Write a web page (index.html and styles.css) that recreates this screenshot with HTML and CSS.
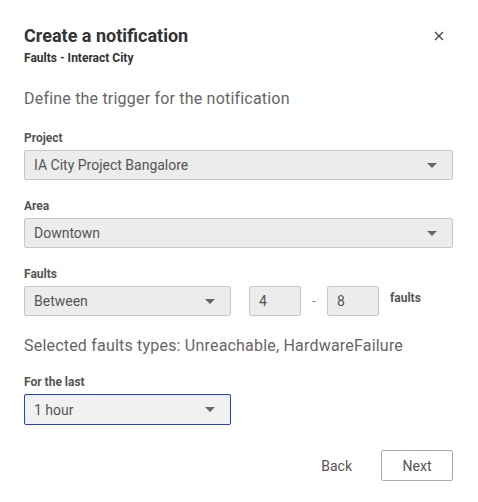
FILE: index.html
```html
<!DOCTYPE html>
<html>
<head>
    <title>Create a notification</title>
    <link rel="stylesheet" href="styles.css">
</head>
<body>
    <div class="dialog">
        <div class="dialog-header">
            <div>
                <h1 class="dialog-title">Create a notification</h1>
                <div class="dialog-subtitle">Faults - Interact City</div>
            </div>
            <button class="close-btn" aria-label="Close">
                <svg width="10" height="10" viewBox="0 0 10 10"><path d="M1 1 L9 9 M9 1 L1 9" stroke="#444" stroke-width="1.3" fill="none"/></svg>
            </button>
        </div>

        <p class="intro">Define the trigger for the notification</p>

        <!-- Project -->
        <div class="field field-first">
            <label class="field-label">Project</label>
            <div class="select">
                <span>IA City Project Bangalore</span>
                <i class="caret"></i>
            </div>
        </div>

        <!-- Area -->
        <div class="field">
            <label class="field-label">Area</label>
            <div class="select">
                <span>Downtown</span>
                <i class="caret"></i>
            </div>
        </div>

        <!-- Faults -->
        <div class="field">
            <label class="field-label">Faults</label>
            <div class="faults-row">
                <div class="select select-half">
                    <span>Between</span>
                    <i class="caret"></i>
                </div>
                <div class="num-input">4</div>
                <span class="dash">-</span>
                <div class="num-input">8</div>
                <span class="unit">faults</span>
            </div>
        </div>

        <p class="selected">Selected faults types: Unreachable, HardwareFailure</p>

        <!-- For the last -->
        <div class="field field-period">
            <label class="field-label">For the last</label>
            <div class="select select-half focused">
                <span>1 hour</span>
                <i class="caret"></i>
            </div>
        </div>

        <div class="actions">
            <button class="btn-text">Back</button>
            <button class="btn-outline">Next</button>
        </div>
    </div>
</body>
</html>
```

FILE: styles.css
```css
body {
    margin: 0;
    font-family: 'Roboto', 'Liberation Sans', sans-serif;
    background: #fff;
    color: #555;
}

.dialog {
    width: 478px;
    box-sizing: border-box;
    padding: 25px 25px 0 24px;
}

/* Header */
.dialog-header {
    display: flex;
    justify-content: space-between;
    align-items: flex-start;
}

.dialog-title {
    margin: 0;
    font-size: 18px;
    line-height: 22px;
    font-weight: 700;
    color: #333;
}

.dialog-subtitle {
    margin-top: 4px;
    font-size: 12px;
    line-height: 14px;
    font-weight: 700;
    color: #333;
}

.close-btn {
    background: none;
    border: none;
    padding: 0;
    margin: 6px 9px 0 0;
    width: 10px;
    height: 10px;
    cursor: pointer;
    display: flex;
}

.intro {
    margin: 24px 0 0;
    font-size: 16px;
    line-height: 20px;
    letter-spacing: 0.2px;
    color: #666;
}

/* Fields */
.field {
    margin-top: 19px;
}

.field-first {
    margin-top: 22px;
}

.field-period {
    margin-top: 19px;
}

.field-label {
    display: block;
    font-size: 12px;
    line-height: 14px;
    font-weight: 700;
    color: #555;
    margin-bottom: 5px;
}

.select {
    height: 30px;
    box-sizing: border-box;
    border: 1px solid #c8c8c8;
    border-radius: 2px;
    background: #ececec;
    display: flex;
    align-items: center;
    justify-content: space-between;
    padding: 0 15px 0 9px;
    font-size: 14px;
    color: #555;
}

.select-half {
    width: 207px;
}

.select.focused {
    border-color: #1e3ff0;
    background: #f1f1f1;
    height: 31px;
}

.caret {
    width: 0;
    height: 0;
    border-left: 5px solid transparent;
    border-right: 5px solid transparent;
    border-top: 5px solid #666;
}

.faults-row {
    display: flex;
    align-items: center;
}

.num-input {
    width: 52px;
    height: 30px;
    box-sizing: border-box;
    border: 1px solid #c8c8c8;
    border-radius: 2px;
    background: #ececec;
    padding-left: 9px;
    font-size: 14px;
    line-height: 28px;
    color: #555;
}

.select-half + .num-input {
    margin-left: 18px;
}

.dash {
    width: 26px;
    text-align: center;
    font-size: 12px;
    color: #777;
}

.unit {
    margin-left: 11px;
    font-size: 12px;
    font-weight: 700;
    color: #555;
    align-self: flex-start;
    margin-top: 5px;
}

.selected {
    margin: 20px 0 0;
    font-size: 16px;
    line-height: 20px;
    letter-spacing: 0.2px;
    color: #666;
}

/* Actions */
.actions {
    display: flex;
    justify-content: flex-end;
    align-items: center;
    margin-top: 25px;
    gap: 29px;
}

.btn-text {
    background: none;
    border: none;
    padding: 0;
    font-family: inherit;
    font-size: 14px;
    color: #555;
    cursor: pointer;
}

.btn-outline {
    width: 72px;
    height: 31px;
    background: #fff;
    border: 1px solid #aaa;
    border-radius: 2px;
    font-family: inherit;
    font-size: 14px;
    color: #555;
    cursor: pointer;
}
```
